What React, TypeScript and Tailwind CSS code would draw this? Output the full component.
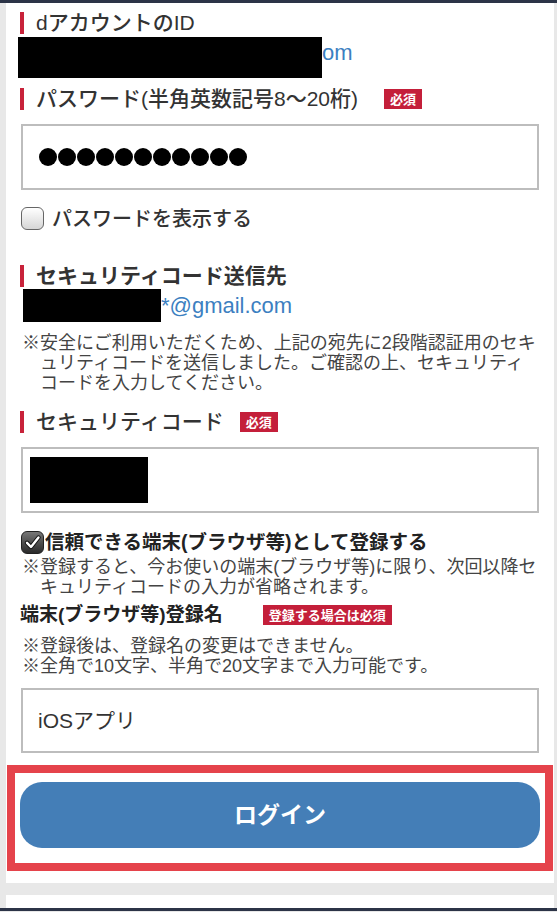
import React from "react";

const FONT = "font-['Liberation_Sans','Noto_Sans_CJK_JP',sans-serif]";

function Badge({ label }: { label: string }) {
  return (
    <span className="h-[20px] px-[6px] flex items-center bg-[#c41f3a] text-white text-[13px] font-bold leading-none">
      {label}
    </span>
  );
}

function Heading({ title, badge, bold, badgeGap = "ml-[16px]", className = "" }: any) {
  return (
    <div className={`h-[26px] flex items-center ${className}`}>
      <span className="w-[4px] h-[22px] bg-[#c8223a]" />
      <span
        className={`ml-[12px] text-[21px] leading-[26px] text-[#333] ${
          bold ? "font-bold" : "font-medium"
        }`}
      >
        {title}
      </span>
      {badge && (
        <span className={badgeGap}>
          <Badge label={badge} />
        </span>
      )}
    </div>
  );
}

function Note({ lines, hanging = true, className = "" }: { lines: string[]; hanging?: boolean; className?: string }) {
  return (
    <p
      className={`ml-[2px] text-[18px] leading-[20px] text-[#444] whitespace-nowrap ${
        hanging ? "pl-[18px] -indent-[18px]" : ""
      } ${className}`}
    >
      {lines.map((l, i) => (
        <React.Fragment key={i}>
          {i > 0 && <br />}
          {l}
        </React.Fragment>
      ))}
    </p>
  );
}

export default function App() {
  return (
    <div className={`w-[557px] h-[912px] bg-[#e8e8e8] flex flex-col overflow-hidden ${FONT}`}>
      <div className="h-[3px] bg-[#2c3447]" />

      {/* main card */}
      <div className="ml-[6px] mr-[3px] bg-white pl-[14px] pr-[15px] pb-[12px] flex flex-col">
        <Heading title="dアカウントのID" className="mt-[7px]" />
        <div className="mt-[1px] flex items-start">
          <div className="-ml-[2px] w-[304px] h-[41px] bg-black" />
          <span className="mt-[3px] text-[22px] leading-[26px] text-[#3c7fc1]">om</span>
        </div>

        <Heading title="パスワード(半角英数記号8～20桁)" badge="必須" badgeGap="ml-[26px]" className="mt-[8px]" />
        <div className="mt-[12px] ml-[1px] h-[66px] border-2 border-[#bdbdbd] flex items-center pl-[16px] gap-[1px]">
          {Array.from({ length: 11 }).map((_, i) => (
            <span key={i} className="w-[18px] h-[18px] rounded-full bg-black" />
          ))}
        </div>

        <label className="mt-[17px] ml-[1px] h-[23px] flex items-center">
          <span className="w-[23px] h-[23px] rounded-[6px] border-[1.5px] border-[#666] bg-linear-to-b from-white to-[#d6d6d6]" />
          <span className="ml-[8px] text-[20px] leading-[24px] font-medium text-[#333]">パスワードを表示する</span>
        </label>

        <Heading title="セキュリティコード送信先" bold className="mt-[33px]" />
        <div className="h-[33px] flex items-center">
          <div className="ml-[3px] w-[138px] h-[33px] bg-black" />
          <span className="text-[22px] leading-[26px] text-[#3c7fc1]">*@gmail.com</span>
        </div>
        <Note
          className="mt-[11px]"
          lines={[
            "※安全にご利用いただくため、上記の宛先に2段階認証用のセキ",
            "ュリティコードを送信しました。ご確認の上、セキュリティ",
            "コードを入力してください。",
          ]}
        />

        <Heading title="セキュリティコード" badge="必須" className="mt-[16px]" />
        <div className="mt-[12px] ml-[1px] h-[66px] border-2 border-[#bdbdbd] flex items-center pl-[7px]">
          <div className="w-[118px] h-[46px] bg-black" />
        </div>

        <label className="mt-[17px] ml-[1px] h-[24px] flex items-center">
          <span className="w-[23px] h-[23px] rounded-[6px] border border-[#222] bg-linear-to-b from-[#777] to-[#2a2a2a] flex items-center justify-center">
            <svg width="19" height="19" viewBox="0 0 19 19">
              <path d="M4 9.8 L8 14 L15.5 4.5" fill="none" stroke="#111" strokeWidth="4.4" strokeLinecap="round" strokeLinejoin="round" />
              <path d="M4 9.8 L8 14 L15.5 4.5" fill="none" stroke="#fff" strokeWidth="2.4" strokeLinecap="round" strokeLinejoin="round" />
            </svg>
          </span>
          <span className="ml-[1px] text-[19.5px] leading-[24px] font-bold text-[#222]">
            信頼できる端末(ブラウザ等)として登録する
          </span>
        </label>
        <Note
          className="mt-[3px]"
          lines={["※登録すると、今お使いの端末(ブラウザ等)に限り、次回以降セ", "キュリティコードの入力が省略されます。"]}
        />

        <div className="mt-[5px] h-[26px] flex items-center">
          <span className="text-[19px] leading-[26px] font-bold text-[#222]">端末(ブラウザ等)登録名</span>
          <span className="ml-[40px]">
            <Badge label="登録する場合は必須" />
          </span>
        </div>
        <Note
          className="mt-[8px]"
          hanging={false}
          lines={["※登録後は、登録名の変更はできません。", "※全角で10文字、半角で20文字まで入力可能です。"]}
        />

        <div className="mt-[12px] ml-[1px] h-[65px] border-2 border-[#bdbdbd] flex items-center pl-[15px] text-[21px] text-[#333]">
          iOSアプリ
        </div>

        <div className="mt-[12px] -ml-[13px] -mr-[14px] border-[8px] border-[#e5434b] pt-[9px] pb-[15px] px-[5px]">
          <button className="w-full h-[66px] rounded-[22px] bg-[#447eb7] text-white text-[23px] font-bold">
            ログイン
          </button>
        </div>
      </div>

      <div className="mt-[12px] ml-[6px] mr-[3px] h-[13px] bg-white" />
      <div className="h-[3px] bg-[#2c3447]" />
    </div>
  );
}
